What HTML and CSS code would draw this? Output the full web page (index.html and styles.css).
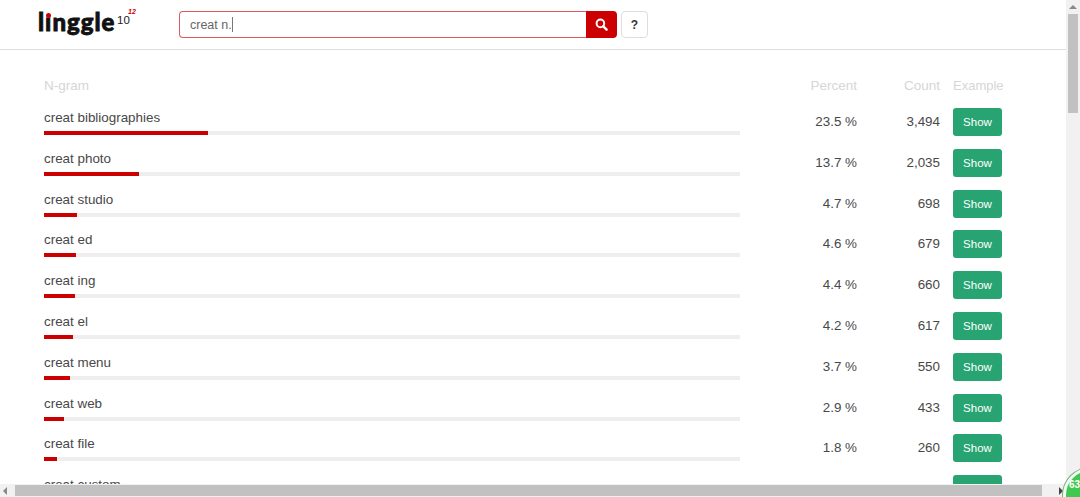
FILE: index.html
```html
<!DOCTYPE html>
<html lang="en">

<head>
    <meta charset="UTF-8">
    <title>Linggle</title>
    <link rel="stylesheet" href="styles.css">
</head>

<body>

    <header class="topbar">
        <div class="logo">
            <span class="logo-word">l<span class="logo-i">ı</span>nggle</span>
            <span class="logo-ten">10</span>
            <span class="logo-exp">12</span>
        </div>
        <form class="search">
            <div class="search-input">creat n.<span class="caret"></span></div>
            <button class="search-btn" type="button" aria-label="Search">
                <svg width="13" height="13" viewBox="0 0 13 13">
                    <circle cx="5.4" cy="5.4" r="3.8" fill="none" stroke="#fff" stroke-width="2" />
                    <path d="M8.3 8.3 L11.6 11.6" stroke="#fff" stroke-width="2.4" stroke-linecap="round" />
                </svg>
            </button>
        </form>
        <button class="help-btn" type="button">?</button>
    </header>

    <main class="results">
        <div class="row head">
            <div class="col-name">N-gram</div>
            <div class="col-percent">Percent</div>
            <div class="col-count">Count</div>
            <div class="col-example">Example</div>
        </div>

        <div class="row">
            <div class="col-name">
                <div class="ngram">creat bibliographies</div>
                <div class="track"><div class="fill" style="width: 23.5%"></div></div>
            </div>
            <div class="col-percent">23.5 %</div>
            <div class="col-count">3,494</div>
            <div class="col-example"><button class="show-btn" type="button">Show</button></div>
        </div>

        <div class="row">
            <div class="col-name">
                <div class="ngram">creat photo</div>
                <div class="track"><div class="fill" style="width: 13.7%"></div></div>
            </div>
            <div class="col-percent">13.7 %</div>
            <div class="col-count">2,035</div>
            <div class="col-example"><button class="show-btn" type="button">Show</button></div>
        </div>

        <div class="row">
            <div class="col-name">
                <div class="ngram">creat studio</div>
                <div class="track"><div class="fill" style="width: 4.7%"></div></div>
            </div>
            <div class="col-percent">4.7 %</div>
            <div class="col-count">698</div>
            <div class="col-example"><button class="show-btn" type="button">Show</button></div>
        </div>

        <div class="row">
            <div class="col-name">
                <div class="ngram">creat ed</div>
                <div class="track"><div class="fill" style="width: 4.6%"></div></div>
            </div>
            <div class="col-percent">4.6 %</div>
            <div class="col-count">679</div>
            <div class="col-example"><button class="show-btn" type="button">Show</button></div>
        </div>

        <div class="row">
            <div class="col-name">
                <div class="ngram">creat ing</div>
                <div class="track"><div class="fill" style="width: 4.4%"></div></div>
            </div>
            <div class="col-percent">4.4 %</div>
            <div class="col-count">660</div>
            <div class="col-example"><button class="show-btn" type="button">Show</button></div>
        </div>

        <div class="row">
            <div class="col-name">
                <div class="ngram">creat el</div>
                <div class="track"><div class="fill" style="width: 4.2%"></div></div>
            </div>
            <div class="col-percent">4.2 %</div>
            <div class="col-count">617</div>
            <div class="col-example"><button class="show-btn" type="button">Show</button></div>
        </div>

        <div class="row">
            <div class="col-name">
                <div class="ngram">creat menu</div>
                <div class="track"><div class="fill" style="width: 3.7%"></div></div>
            </div>
            <div class="col-percent">3.7 %</div>
            <div class="col-count">550</div>
            <div class="col-example"><button class="show-btn" type="button">Show</button></div>
        </div>

        <div class="row">
            <div class="col-name">
                <div class="ngram">creat web</div>
                <div class="track"><div class="fill" style="width: 2.9%"></div></div>
            </div>
            <div class="col-percent">2.9 %</div>
            <div class="col-count">433</div>
            <div class="col-example"><button class="show-btn" type="button">Show</button></div>
        </div>

        <div class="row">
            <div class="col-name">
                <div class="ngram">creat file</div>
                <div class="track"><div class="fill" style="width: 1.8%"></div></div>
            </div>
            <div class="col-percent">1.8 %</div>
            <div class="col-count">260</div>
            <div class="col-example"><button class="show-btn" type="button">Show</button></div>
        </div>

        <div class="row">
            <div class="col-name">
                <div class="ngram">creat custom</div>
            </div>
            <div class="col-percent"></div>
            <div class="col-count"></div>
            <div class="col-example"><button class="show-btn" type="button">Show</button></div>
        </div>
    </main>

    <!-- browser scrollbars and the floating badge sit over the page -->
    <div class="scroll-v">
        <span class="arrow-up"></span>
        <div class="scroll-v-thumb"></div>
    </div>
    <div class="scroll-h">
        <span class="arrow-left"></span>
        <div class="scroll-h-thumb"></div>
        <span class="arrow-right"></span>
    </div>
    <div class="badge-clip">
        <div class="badge"><span class="badge-num">63</span></div>
    </div>

</body>

</html>
```

FILE: styles.css
```css
html,
body {
    margin: 0;
    height: 497px;
    overflow: hidden;
}

body {
    position: relative;
    font-family: "Liberation Sans", Arial, sans-serif;
    font-size: 13.4px;
    color: #484848;
    background: #fff;
}

/* top bar */
.topbar {
    display: flex;
    align-items: flex-start;
    height: 49px;
    border-bottom: 1px solid #ddd;
    padding-left: 38px;
}

.logo {
    position: relative;
    width: 141px;
    height: 49px;
    color: #111;
}

.logo-word {
    position: absolute;
    left: 0;
    top: 6px;
    font-family: "Lato", sans-serif;
    font-weight: 900;
    font-size: 24px;
    letter-spacing: 1px;
    line-height: 32px;
    -webkit-text-stroke: 0.8px #111;
}

.logo-i {
    position: relative;
}

.logo-i::before {
    content: "";
    position: absolute;
    left: 1px;
    top: 6px;
    width: 5px;
    height: 5px;
    border-radius: 50%;
    background: #c00;
}

.logo-ten {
    position: absolute;
    left: 79px;
    top: 13px;
    font-size: 11.5px;
    line-height: 14px;
    color: #222;
}

.logo-exp {
    position: absolute;
    left: 90px;
    top: 8px;
    font-size: 7px;
    line-height: 8px;
    font-weight: bold;
    font-style: italic;
    color: #c00;
}

.search {
    display: flex;
    width: 438px;
    height: 27px;
    margin-top: 11px;
}

.search-input {
    flex: 1;
    box-sizing: border-box;
    border: 1px solid #dd5a5f;
    border-right: none;
    border-radius: 4px 0 0 4px;
    padding-left: 10px;
    font-size: 12.5px;
    line-height: 26px;
    color: #666;
}

.caret {
    display: inline-block;
    width: 1px;
    height: 15px;
    vertical-align: -3px;
    background: #777;
}

.search-btn {
    display: flex;
    align-items: center;
    justify-content: center;
    width: 31px;
    padding: 0;
    border: none;
    border-radius: 0 4px 4px 0;
    background: #c00;
}

.help-btn {
    width: 27px;
    height: 27px;
    margin: 11px 0 0 4px;
    padding: 0;
    border: 1px solid #ddd;
    border-radius: 4px;
    background: #fff;
    font-family: "Liberation Sans", Arial, sans-serif;
    font-size: 12px;
    font-weight: bold;
    color: #333;
}

/* results table */
.results {
    height: 426px;
    overflow: hidden;
    padding: 21px 0 0 44px;
}

.row {
    display: grid;
    grid-template-columns: 696px 117px 83px 62px;
    height: 40.8px;
    align-items: start;
}

.head {
    height: 37px;
    padding-top: 7px;
    box-sizing: border-box;
    color: #d6d6d6;
}

.col-name {
    padding-top: 2px;
}

.col-percent,
.col-count {
    text-align: right;
    padding-top: 6px;
    line-height: 16px;
}

.head .col-name,
.head .col-percent,
.head .col-count {
    padding-top: 0;
    font-size: 13.5px;
}

.head .col-example {
    font-size: 13px;
}

.col-example {
    padding-left: 13px;
}

.ngram {
    line-height: 16px;
}

.track {
    height: 4px;
    margin-top: 5px;
    background: #eee;
}

.fill {
    height: 4px;
    background: #c00;
}

.show-btn {
    display: block;
    width: 49px;
    height: 28px;
    padding: 0;
    border: none;
    border-radius: 3px;
    background: #28a473;
    font-family: "Liberation Sans", Arial, sans-serif;
    font-size: 11.5px;
    color: #fff;
}

/* scrollbars */
.scroll-v {
    position: absolute;
    top: 0;
    right: 0;
    bottom: 0;
    width: 14px;
    background: #f1f1f1;
}

.arrow-up {
    position: absolute;
    left: 3px;
    top: 5px;
    width: 0;
    height: 0;
    border: 4px solid transparent;
    border-top-width: 0;
    border-bottom-color: #888;
}

.scroll-v-thumb {
    position: absolute;
    top: 14px;
    left: 2px;
    width: 10px;
    height: 99px;
    background: #c1c1c1;
}

.scroll-h {
    position: absolute;
    left: 0;
    right: 0;
    bottom: 0;
    height: 13px;
    display: flex;
    align-items: center;
    background: #f1f1f1;
}

.scroll-h-thumb {
    width: 1027px;
    height: 11px;
    margin-left: 8px;
    background: #c1c1c1;
}

.arrow-left {
    width: 0;
    height: 0;
    margin-left: 3px;
    border: 4px solid transparent;
    border-left-width: 0;
    border-right-color: #888;
}

.arrow-right {
    width: 0;
    height: 0;
    margin-left: 17px;
    border: 4px solid transparent;
    border-right-width: 0;
    border-left-color: #444;
}

/* clip box keeps the circle inside the window corner */
.badge-clip {
    position: absolute;
    right: 0;
    bottom: 0;
    width: 18px;
    height: 30px;
    overflow: hidden;
}

.badge {
    position: absolute;
    left: 1px;
    top: 1px;
    width: 54px;
    height: 54px;
    box-sizing: border-box;
    border: 3px solid #f4faf4;
    border-radius: 50%;
    box-shadow: 0 0 0 1px #6fae78;
    background: #40c94f;
}

.badge-num {
    position: absolute;
    left: 3px;
    top: 8px;
    font-size: 10px;
    font-weight: bold;
    color: #fff;
}
```
